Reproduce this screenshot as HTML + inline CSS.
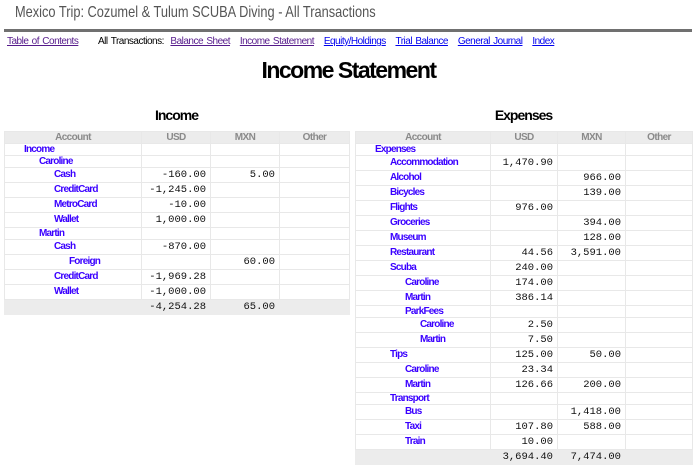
<!DOCTYPE html>
<html><head><meta charset="utf-8"><style>
*{margin:0;padding:0;box-sizing:border-box}
body{width:697px;height:468px;background:#fff;font-family:"Liberation Sans",sans-serif;position:relative;overflow:hidden}
.t{position:absolute;left:15px;top:4px;font-size:16px;color:#555;white-space:nowrap;transform:scaleX(0.8);transform-origin:left top}
.bar{position:absolute;left:4px;top:29px;width:688px;height:3px;background:#707070}
.nav{position:absolute;top:36px;font-size:10px;white-space:nowrap;letter-spacing:-0.5px;word-spacing:1px}
.nav a{color:#0000ee;text-decoration:underline}
.nav a.v{color:#551a8b}
h1{position:absolute;left:0;width:697px;text-align:center;top:57px;font-size:23px;font-weight:bold;color:#000;letter-spacing:-1.5px}
h2{position:absolute;top:107px;font-size:14px;font-weight:bold;text-align:center;letter-spacing:-1px}
table{position:absolute;top:131px;border-collapse:collapse;table-layout:fixed}
td,th{border:1px solid #e8e8e8;font-size:10px;white-space:nowrap;overflow:hidden}
th{background:#ececec;color:#8a8a8a;font-weight:bold;height:12px;line-height:10px;text-align:center;letter-spacing:-0.6px}
td{height:15px}
tr.g td{height:12px}
td.a{color:#3a00ff;font-weight:bold;line-height:10px;letter-spacing:-0.8px}
td.n{font-family:"Liberation Mono",monospace;text-align:right;padding-right:4px;color:#111;font-size:10.5px}
tr.tot td{background:#ececec;border-color:#ececec}
</style></head><body>
<div class="t">Mexico Trip: Cozumel &amp; Tulum SCUBA Diving - All Transactions</div>
<div class="bar"></div>
<div class="nav" style="left:7px"><a class="v">Table of Contents</a></div>
<div class="nav" style="left:98px">All Transactions:&nbsp; <a class="v">Balance Sheet</a>&nbsp;&nbsp; <a class="v">Income Statement</a>&nbsp;&nbsp; <a>Equity/Holdings</a>&nbsp;&nbsp; <a>Trial Balance</a>&nbsp;&nbsp; <a>General Journal</a>&nbsp;&nbsp; <a>Index</a></div>
<h1>Income Statement</h1>
<h2 style="left:4px;width:345px">Income</h2>
<h2 style="left:355px;width:337px">Expenses</h2>
<table style="left:4px;width:345px">
<colgroup><col style="width:137px"><col style="width:69px"><col style="width:69px"><col style="width:70px"></colgroup>
<tr><th>Account</th><th>USD</th><th>MXN</th><th>Other</th></tr>
<tr class="g"><td class="a" style="padding-left:19px">Income</td><td></td><td></td><td></td></tr>
<tr class="g"><td class="a" style="padding-left:34px">Caroline</td><td></td><td></td><td></td></tr>
<tr><td class="a" style="padding-left:49px">Cash</td><td class="n">-160.00</td><td class="n">5.00</td><td></td></tr>
<tr><td class="a" style="padding-left:49px">CreditCard</td><td class="n">-1,245.00</td><td></td><td></td></tr>
<tr><td class="a" style="padding-left:49px">MetroCard</td><td class="n">-10.00</td><td></td><td></td></tr>
<tr><td class="a" style="padding-left:49px">Wallet</td><td class="n">1,000.00</td><td></td><td></td></tr>
<tr class="g"><td class="a" style="padding-left:34px">Martin</td><td></td><td></td><td></td></tr>
<tr><td class="a" style="padding-left:49px">Cash</td><td class="n">-870.00</td><td></td><td></td></tr>
<tr><td class="a" style="padding-left:64px">Foreign</td><td></td><td class="n">60.00</td><td></td></tr>
<tr><td class="a" style="padding-left:49px">CreditCard</td><td class="n">-1,969.28</td><td></td><td></td></tr>
<tr><td class="a" style="padding-left:49px">Wallet</td><td class="n">-1,000.00</td><td></td><td></td></tr>
<tr class="tot"><td></td><td class="n">-4,254.28</td><td class="n">65.00</td><td></td></tr>
</table>
<table style="left:355px;width:337px">
<colgroup><col style="width:135px"><col style="width:67px"><col style="width:68px"><col style="width:67px"></colgroup>
<tr><th>Account</th><th>USD</th><th>MXN</th><th>Other</th></tr>
<tr class="g"><td class="a" style="padding-left:19px">Expenses</td><td></td><td></td><td></td></tr>
<tr><td class="a" style="padding-left:34px">Accommodation</td><td class="n">1,470.90</td><td></td><td></td></tr>
<tr><td class="a" style="padding-left:34px">Alcohol</td><td></td><td class="n">966.00</td><td></td></tr>
<tr><td class="a" style="padding-left:34px">Bicycles</td><td></td><td class="n">139.00</td><td></td></tr>
<tr><td class="a" style="padding-left:34px">Flights</td><td class="n">976.00</td><td></td><td></td></tr>
<tr><td class="a" style="padding-left:34px">Groceries</td><td></td><td class="n">394.00</td><td></td></tr>
<tr><td class="a" style="padding-left:34px">Museum</td><td></td><td class="n">128.00</td><td></td></tr>
<tr><td class="a" style="padding-left:34px">Restaurant</td><td class="n">44.56</td><td class="n">3,591.00</td><td></td></tr>
<tr><td class="a" style="padding-left:34px">Scuba</td><td class="n">240.00</td><td></td><td></td></tr>
<tr><td class="a" style="padding-left:49px">Caroline</td><td class="n">174.00</td><td></td><td></td></tr>
<tr><td class="a" style="padding-left:49px">Martin</td><td class="n">386.14</td><td></td><td></td></tr>
<tr class="g"><td class="a" style="padding-left:49px">ParkFees</td><td></td><td></td><td></td></tr>
<tr><td class="a" style="padding-left:64px">Caroline</td><td class="n">2.50</td><td></td><td></td></tr>
<tr><td class="a" style="padding-left:64px">Martin</td><td class="n">7.50</td><td></td><td></td></tr>
<tr><td class="a" style="padding-left:34px">Tips</td><td class="n">125.00</td><td class="n">50.00</td><td></td></tr>
<tr><td class="a" style="padding-left:49px">Caroline</td><td class="n">23.34</td><td></td><td></td></tr>
<tr><td class="a" style="padding-left:49px">Martin</td><td class="n">126.66</td><td class="n">200.00</td><td></td></tr>
<tr class="g"><td class="a" style="padding-left:34px">Transport</td><td></td><td></td><td></td></tr>
<tr><td class="a" style="padding-left:49px">Bus</td><td></td><td class="n">1,418.00</td><td></td></tr>
<tr><td class="a" style="padding-left:49px">Taxi</td><td class="n">107.80</td><td class="n">588.00</td><td></td></tr>
<tr><td class="a" style="padding-left:49px">Train</td><td class="n">10.00</td><td></td><td></td></tr>
<tr class="tot"><td></td><td class="n">3,694.40</td><td class="n">7,474.00</td><td></td></tr>
</table>
</body></html>
